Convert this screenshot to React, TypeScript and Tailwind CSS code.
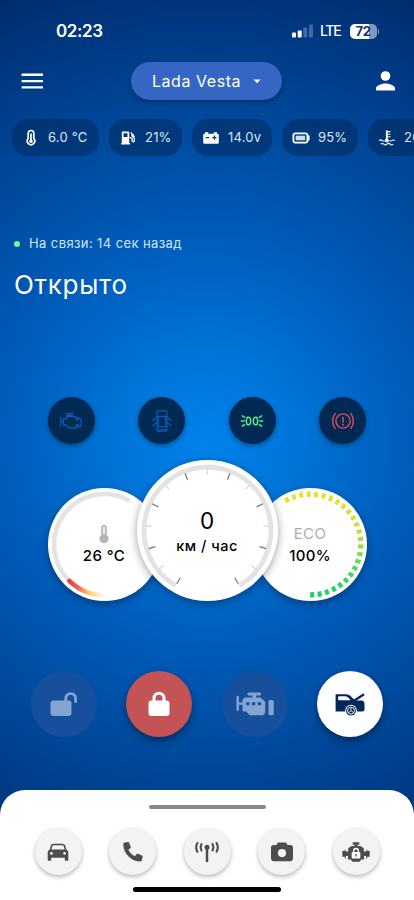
import type { ReactNode } from 'react';

/* ---------- Icons ---------- */

const ThermometerIcon = () => (
  <svg width="18" height="18" viewBox="0 0 18 18" fill="none" stroke="white">
    <path d="M6.2 4.300a2.800 2.800 0 0 1 5.600 0v5.200a3.700 3.700 0 1 1-5.600 0z" strokeWidth="1.700" />
    <path d="M9 5v7" strokeWidth="1.700" strokeLinecap="round" />
    <circle cx="9" cy="12.200" r="1.700" fill="white" stroke="none" />
  </svg>
);

const FuelIcon = () => (
  <svg width="18" height="18" viewBox="0 0 18 18" fill="none">
    <path
      fill="white"
      fillRule="evenodd"
      d="M4 2.600h5a1.200 1.200 0 0 1 1.200 1.200V14h.7v1.400H2.200V14h.6V3.800A1.200 1.200 0 0 1 4 2.600zm.5 1.700v3.600h4V4.300z"
    />
    <path d="M11.700 3.400l2.600 2.700c.8 1 1 2.400 1 4v1.700a1.100 1.100 0 0 1-2.200 0V10c0-.9-.6-1.400-2.600-1.400M13 5v1.700c0 1 .7 1.300 2 1.300" stroke="white" strokeWidth="1.300" />
  </svg>
);

const CarBatteryIcon = () => (
  <svg width="18" height="18" viewBox="0 0 18 18">
    <path
      fill="white"
      fillRule="evenodd"
      d="M3 3.200h3.200v1.600h5.600V3.200H15v1.600h.6a1.200 1.200 0 0 1 1.200 1.200v7.600a1.200 1.200 0 0 1-1.200 1.200H2.400a1.200 1.200 0 0 1-1.200-1.200V6a1.200 1.200 0 0 1 1.200-1.200H3zM3.600 8v1.300h3.600V8zm8.200-1.400V8h-1.400v1.300h1.400v1.400h1.300V9.300h1.400V8h-1.400V6.600z"
    />
  </svg>
);

const BatteryIcon = () => (
  <svg width="18" height="18" viewBox="0 0 18 18">
    <rect x="1.400" y="4.400" width="14" height="9.200" rx="1.800" fill="none" stroke="white" strokeWidth="1.800" />
    <rect x="3.700" y="6.700" width="9.400" height="4.600" fill="#cfdcee" />
    <path d="M16 6.600h1.600v4.800H16z" fill="white" />
  </svg>
);

const CoolantIcon = () => (
  <svg width="18" height="18" viewBox="0 0 18 18" fill="none" stroke="white">
    <path d="M8.800 1.400v10" strokeWidth="1.800" />
    <path d="M9 2.600h3.400M9 5.200h3.400M9 7.800h3.400" strokeWidth="1.100" />
    <circle cx="8.800" cy="11.600" r="2" fill="white" stroke="none" />
    <path d="M1 11.600c1.200-1 2.200-1 3.200 0 .8.600 1.400.6 2.200.2M11.400 11.800c.8.400 1.400.4 2.200-.2 1-.9 2-.9 3.200 0M2.600 15.200c1.200-1 2.200-1 3.200 0s2.100 1 3.200 0 2.200-1 3.200 0 2 .9 3 0" strokeWidth="1.100" />
  </svg>
);

const CheckEngineIcon = () => (
  <svg width="24" height="20" viewBox="0 0 24 20" fill="none" stroke="#0f58b4" strokeWidth="1.300">
    <path d="M6.200 2.700h8.600M10.500 3v2.400M7.200 4.500h6.600" />
    <path d="M1.700 5.800v10M1.700 10.700h2.600M4.300 7.600v6.400h2.900l3.500 3h6.500v-3h2v2h1.600c1.100-1 1.500-2.600 1.500-4.600s-.4-3.600-1.500-4.500h-1.600v2h-2V5.700H7.700v1.900z" />
  </svg>
);

const DoorsIcon = () => (
  <svg width="24" height="24" viewBox="0 0 24 24" fill="none" stroke="#0f58b4" strokeWidth="1.300">
    <path d="M8.300 1.900h7.400c.7 0 1.200.5 1.200 1.200v17.800c0 .8-.5 1.300-1.200 1.300H8.300c-.7 0-1.200-.5-1.200-1.300V3.100c0-.7.5-1.200 1.200-1.200z" />
    <path d="M7.200 7.500h9.600M7.200 17.600h9.600M8 20.800h8M7 7.800l-4.400 4.100M7 13.200l-4.400 4.100M17 7.800l4.400 4.100M17 13.200l4.400 4.100" />
    <path d="M8.400 8v9.400M15.600 8v9.400" strokeWidth="1" />
  </svg>
);

const ParkingLightsIcon = () => (
  <svg width="24" height="18" viewBox="0 0 24 18" fill="none" stroke="#62e88c" strokeWidth="1.500" strokeLinecap="round">
    <path d="M8.200 5.200h-.8C6.700 6.200 6.300 7.500 6.300 9s.4 2.800 1.100 3.800h.8c1.500 0 2.500-1.700 2.500-3.800S9.700 5.200 8.200 5.200zM15.800 5.200h.8c.7 1 1.100 2.300 1.100 3.800s-.4 2.800-1.100 3.800h-.8c-1.500 0-2.500-1.700-2.500-3.800s1-3.800 2.500-3.800z" />
    <path d="M4.600 5.300L2.400 3.900M4.200 9H1.400M4.600 12.700l-2.200 1.400M19.400 5.300l2.200-1.400M19.800 9h2.800M19.400 12.700l2.200 1.400" />
  </svg>
);

const BrakeIcon = () => (
  <svg width="24" height="20" viewBox="0 0 24 20" fill="none" stroke="#df4a59" strokeWidth="1.400" strokeLinecap="round">
    <circle cx="12" cy="10" r="7.100" />
    <path d="M4.100 2.600c-3.300 4.400-3.300 10.400 0 14.800M19.900 2.600c3.300 4.400 3.300 10.400 0 14.800M12 6.200v5" />
    <circle cx="12" cy="13.800" r=".4" />
  </svg>
);

const UnlockedIcon = () => (
  <svg width="30" height="28" viewBox="0 0 30 28" fill="#84a5d2">
    <rect x="1.500" y="10.500" width="21" height="15.500" rx="3" />
    <path d="M16.800 11V8.500a4.900 4.900 0 0 1 9.800 0v3" fill="none" stroke="#84a5d2" strokeWidth="2.900" strokeLinecap="round" />
  </svg>
);

const LockedIcon = () => (
  <svg width="24" height="28" viewBox="0 0 24 28" fill="white">
    <rect x="1.500" y="10.500" width="21" height="15.500" rx="3" />
    <path d="M7 11.500V8.200a5 5 0 0 1 10 0v3.300" fill="none" stroke="white" strokeWidth="3" />
  </svg>
);

const EngineIcon = () => (
  <svg width="40" height="26" viewBox="0 0 40 26" fill="#84a5d2">
    <rect x="12.500" y="1.500" width="13.500" height="3" rx="1.300" />
    <path d="M17.500 4h3.500v3h-3.500z" />
    <path d="M2.700 6v12.800M3 12.600h5" fill="none" stroke="#84a5d2" strokeWidth="2.400" strokeLinecap="round" />
    <path d="M10.800 6.500h14.700l4.700 4.200v10c0 2-1.200 3.500-3.200 3.500H14.800l-3.500-3.600H9.200c-1 0-1.700-.7-1.700-1.700V9.800c0-2 1.300-3.300 3.300-3.300z" />
    <rect x="33.500" y="9" width="5.200" height="15.200" rx="1.500" />
    <g fill="#164f9b">
      <circle cx="12.800" cy="12.800" r="1.800" />
      <circle cx="18.600" cy="12.800" r="1.800" />
      <circle cx="24.400" cy="12.800" r="1.800" />
    </g>
  </svg>
);

const TrunkIcon = () => (
  <svg width="32" height="26" viewBox="0 0 32 26" fill="#03265a">
    <path
      fillRule="evenodd"
      d="M1.600 3.200h10.900c3 0 4.800 2.300 6.800 4.600l1.400 1.700h6.800c2 0 3 1.500 3 3.500v5.500c0 1.300-.8 2-2 2H1.600zM5.500 5.300c-.9 0-1.400.5-1.400 1.300v1.300c0 .8.500 1.300 1.400 1.300h11c-1.700-2.200-3.100-3.900-5.400-3.900z"
    />
    <path d="M20 9.800l9.300-6" stroke="#03265a" strokeWidth="2.300" strokeLinecap="round" />
    <circle cx="17" cy="19.700" r="5.900" fill="white" />
    <circle cx="17" cy="19.700" r="4.900" />
    <circle cx="17" cy="19.700" r="3.500" fill="none" stroke="white" strokeWidth=".9" />
    <path d="M17 16.400v3.300l2.600 2M17 19.700l-2.600 2" stroke="white" strokeWidth=".8" fill="none" />
  </svg>
);

const CarIcon = () => (
  <svg width="24" height="20" viewBox="0 0 24 20" fill="#4d4d4d">
    <path
      fillRule="evenodd"
      d="M7.500 1.700h9c1.300 0 2.300.7 2.700 1.900l1.200 4.100c1.100.4 1.900 1.400 1.900 2.700v7.300c0 .6-.4 1-1 1h-1.500c-.6 0-1-.4-1-1v-2H5.200v2c0 .6-.4 1-1 1H2.700c-.6 0-1-.4-1-1v-7.300c0-1.300.8-2.300 1.900-2.700l1.200-4.100c.4-1.200 1.400-1.900 2.700-1.900zm.2 1.600c-.8 0-1.200.3-1.400 1l-1 3.200h13.400l-1-3.200c-.2-.7-.6-1-1.400-1zM5.400 10a1.400 1.400 0 1 0 0 2.800 1.400 1.400 0 0 0 0-2.800zm13.200 0a1.400 1.400 0 1 0 0 2.800 1.400 1.400 0 0 0 0-2.800z"
    />
  </svg>
);

const PhoneIcon = () => (
  <svg width="22" height="22" viewBox="0 0 22 22" fill="#4d4d4d">
    <path d="M2.100 1.800L5.800 1c.6-.1 1.100.2 1.300.7l1.700 4c.2.500.1 1-.3 1.300L6.400 8.800c1.300 2.800 3.600 5.100 6.500 6.500l1.800-2.200c.3-.4.9-.5 1.300-.3l4 1.700c.5.2.8.8.7 1.300l-.9 3.800c-.1.500-.6.9-1.100.9C9.300 20.500 1.200 12.400 1.200 2.900c0-.5.4-1 .9-1.100z" />
  </svg>
);

const AntennaIcon = () => (
  <svg width="26" height="22" viewBox="0 0 26 22" fill="none" stroke="#4d4d4d" strokeWidth="2.100" strokeLinecap="round">
    <path d="M13 7v13" strokeWidth="2.500" />
    <circle cx="13" cy="6.300" r="2.500" fill="#4d4d4d" stroke="none" />
    <path d="M7.500 3.200c-1 1.900-1 4.300 0 6.200M3.400 2c-1.500 2.700-1.500 6 0 8.700M18.500 3.200c1 1.900 1 4.300 0 6.200M22.600 2c1.500 2.700 1.500 6 0 8.700" />
  </svg>
);

const CameraIcon = () => (
  <svg width="24" height="22" viewBox="0 0 24 22" fill="#4d4d4d">
    <path
      fillRule="evenodd"
      d="M8.700 1.500h6.600c.7 0 1.200.4 1.500 1l.6 1.500h3c1.500 0 2.600 1.100 2.600 2.600v11c0 1.500-1.100 2.600-2.600 2.600H3.600C2.100 20.200 1 19.100 1 17.600v-11C1 5.100 2.100 4 3.600 4h3l.6-1.500c.3-.6.8-1 1.500-1zM12 8a4.100 4.100 0 1 0 0 8.200A4.100 4.100 0 0 0 12 8z"
    />
  </svg>
);

const EngineLockIcon = () => (
  <svg width="30" height="22" viewBox="0 0 30 22" fill="#4d4d4d">
    <path d="M11.700 1.200h6.600v2.600h-1.800V5h3l3.300 2.200v3.200h2.400V8.700h1V9.900h2.500v5.900h-2.500v1.600h-1v-2.300h-2.200v3.300h-2.700l-1.600 2.300h-7.400l-1.600-2.300H7v-3.300H4.800v2.300h-1v-1.600H1.300V9.900h2.500V8.700h1v1.700h2.400V7.200L10.500 5h3V3.800h-1.800z" />
    <rect x="10.700" y="11" width="8.600" height="6.600" rx=".8" fill="white" />
    <path d="M12.700 11.200V9.800a2.300 2.300 0 0 1 4.600 0v1.400" fill="none" stroke="white" strokeWidth="1.400" />
    <path d="M15 12.900v2.600" stroke="#4d4d4d" strokeWidth="1.300" />
  </svg>
);

/* ---------- Data ---------- */

const chips: { icon: ReactNode; value: string; width: string }[] = [
  { icon: <ThermometerIcon />, value: '6.0 °C', width: 'w-[87px]' },
  { icon: <FuelIcon />, value: '21%', width: 'w-[73px]' },
  { icon: <CarBatteryIcon />, value: '14.0v', width: 'w-[80px]' },
  { icon: <BatteryIcon />, value: '95%', width: 'w-[76px]' },
  { icon: <CoolantIcon />, value: '26 °C', width: 'w-[87px]' },
];

const indicators = [<CheckEngineIcon />, <DoorsIcon />, <ParkingLightsIcon />, <BrakeIcon />];

const actions = [
  { icon: <UnlockedIcon />, style: 'bg-[#164f9b]' },
  { icon: <LockedIcon />, style: 'bg-[#c45355] shadow-[0_4px_9px_rgba(0,0,0,0.4)]' },
  { icon: <EngineIcon />, style: 'bg-[#164f9b]' },
  { icon: <TrunkIcon />, style: 'bg-white shadow-[0_4px_9px_rgba(0,0,0,0.4)]' },
];

const tabs = [<CarIcon />, <PhoneIcon />, <AntennaIcon />, <CameraIcon />, <EngineLockIcon />];

const ecoColors = [
  '#ece02f', '#ece02f', '#ecdf2f', '#ecdf2f', '#ebde30', '#ebde30', '#eade31', '#e8de33', '#e4de36',
  '#dfde39', '#d6de3d', '#cbde41', '#bcde46', '#a9dd4b', '#93dc50', '#7cdb55', '#66da5a', '#52d85f',
  '#42d663', '#36d566', '#2dd368', '#27d26a', '#22d16b', '#1fd06c', '#1dcf6c',
];

/* ---------- Gauges ---------- */

// angle is measured clockwise from the top
const polar = (c: number, r: number, angle: number) => {
  const rad = (angle * Math.PI) / 180;
  return [c + r * Math.sin(rad), c - r * Math.cos(rad)];
};

const arc = (c: number, r: number, from: number, to: number) => {
  const [x1, y1] = polar(c, r, from);
  const [x2, y2] = polar(c, r, to);
  return `M${x1} ${y1}A${r} ${r} 0 ${to - from > 180 ? 1 : 0} 1 ${x2} ${y2}`;
};

function TemperatureGauge() {
  return (
    <div className="relative w-[113px] h-[113px] rounded-full bg-white shadow-[0_3px_8px_rgba(0,0,0,0.35)]">
      <svg className="absolute inset-0" width="113" height="113" viewBox="0 0 113 113" fill="none">
        <defs>
          <linearGradient id="heat" gradientUnits="userSpaceOnUse" x1="21" y1="0" x2="57" y2="0">
            <stop offset="0" stopColor="#f0393f" />
            <stop offset="0.25" stopColor="#f4605a" />
            <stop offset="0.55" stopColor="#fbcb74" />
            <stop offset="1" stopColor="#ffffff" />
          </linearGradient>
        </defs>
        <path d={arc(56.5, 50.5, 224, 388)} stroke="#e3e3e3" strokeWidth="4.500" strokeLinecap="round" />
        <path d={arc(56.5, 50.5, 180, 224)} stroke="url(#heat)" strokeWidth="4.500" strokeLinecap="round" />
      </svg>
      <div className="relative flex flex-col items-center pt-[36px]">
        <svg width="12" height="20" viewBox="0 0 12 20">
          <path d="M3.200 3.800a2.800 2.800 0 0 1 5.600 0v7.300a4.600 4.600 0 1 1-5.600 0z" fill="#b5b5b5" />
          <path d="M6 3.500v6" stroke="white" strokeWidth="1.500" strokeLinecap="round" />
        </svg>
        <span className="mt-[2px] text-[15px] leading-5 font-medium tracking-[0.4px] text-black">26 °C</span>
      </div>
    </div>
  );
}

function SpeedGauge() {
  const ticks = Array.from({ length: 15 }, (_, i) => ({ angle: -150 + (i * 150) / 7, major: i % 2 === 0 }));

  return (
    <div className="relative z-10 -mx-6 w-[141px] h-[141px] rounded-full bg-white shadow-[0_2px_9px_rgba(0,0,0,0.38)]">
      <svg className="absolute inset-0" width="141" height="141" viewBox="0 0 141 141" fill="none">
        <path d={arc(70.5, 63.5, -150, 150)} stroke="#e3e3e3" strokeWidth="4.800" />
        {ticks.map(({ angle, major }) => {
          const [x1, y1] = polar(70.5, major ? 54.5 : 56, angle);
          const [x2, y2] = polar(70.5, 61.5, angle);
          return (
            <line key={angle} x1={x1} y1={y1} x2={x2} y2={y2} stroke={major ? '#757575' : '#d6d6d6'} strokeWidth="1.200" />
          );
        })}
      </svg>
      <div className="relative flex flex-col items-center pt-[47px] text-black">
        <span className="text-[22.5px] leading-7">0</span>
        <span className="mt-px text-[14.500px] leading-5 font-medium tracking-[0.5px]">км / час</span>
      </div>
    </div>
  );
}

function EcoGauge() {
  return (
    <div className="relative w-[113px] h-[113px] rounded-full bg-white shadow-[0_3px_8px_rgba(0,0,0,0.35)]">
      <svg className="absolute inset-0" width="113" height="113" viewBox="0 0 113 113" fill="none">
        {ecoColors.map((color, i) => {
          const angle = -27.8 + i * 8.58;
          return <path key={i} d={arc(56.5, 50.3, angle - 2.3, angle + 2.3)} stroke={color} strokeWidth="5.300" />;
        })}
      </svg>
      <div className="relative flex flex-col items-center pt-[36px] text-[15px] leading-5">
        <span className="tracking-[0.4px] text-[#adadad]">ECO</span>
        <span className="mt-[2px] font-medium tracking-[0.3px] text-black">100%</span>
      </div>
    </div>
  );
}

/* ---------- Page ---------- */

export default function App() {
  return (
    <div className="flex h-[900px] w-[414px] flex-col overflow-hidden bg-[radial-gradient(circle_at_50%_440px,#0082ec_0px,#0074d8_90px,#005bb8_210px,#00479a_330px,#002a69_500px)] font-['Inter',sans-serif] text-white">
      {/* Status bar */}
      <div className="flex h-[62px] shrink-0 items-center justify-between pl-[56px] pr-[35px]">
        <span className="text-[17px] leading-5 font-semibold tracking-[-0.4px]">02:23</span>
        <div className="flex items-center">
          <svg width="21" height="14" viewBox="0 0 21 14" fill="white">
            <rect x="0" y="8.500" width="4" height="5" rx="1" />
            <rect x="5.700" y="6.500" width="4" height="7" rx="1" />
            <rect x="11.300" y="3.500" width="4" height="10" rx="1" opacity="0.25" />
            <rect x="17" y=".5" width="4" height="13" rx="1" opacity="0.25" />
          </svg>
          <span className="ml-[7px] text-[14px] leading-4 font-medium tracking-[-1.2px]">LTE</span>
          <div className="ml-[9px] flex h-[15px] w-[27px] items-center justify-center rounded-[5px] bg-[linear-gradient(90deg,#fff_72%,#8398be_72%)] text-[13px] leading-none font-bold tracking-[-0.3px] text-[#0b3471]">
            72
          </div>
          <div className="ml-px h-[5px] w-[1.5px] rounded-r-full bg-[#8398be]" />
        </div>
      </div>

      {/* Header */}
      <div className="flex h-[38px] shrink-0 items-center justify-between pl-[21px] pr-[19px]">
        <button>
          <svg width="22" height="16" viewBox="0 0 22 16" fill="white">
            <path d="M.6.6h21.400v2.300H.6zM.6 6.900h21.400v2.300H.6zM.6 13.200h21.400v2.300H.6z" />
          </svg>
        </button>
        <button className="-ml-[6px] flex h-[38px] w-[151px] items-center justify-center rounded-full bg-[#3566c3] shadow-[0_2px_4px_rgba(0,0,0,0.35)]">
          <span className="text-[16px] tracking-[0.55px]">Lada Vesta</span>
          <svg className="ml-[12px]" width="8" height="5" viewBox="0 0 8 5" fill="white">
            <path d="M.5.500h7L4 4.200z" />
          </svg>
        </button>
        <button>
          <svg width="19" height="20" viewBox="0 0 19 20" fill="white">
            <circle cx="9.500" cy="5" r="4.800" />
            <path d="M0 19.500v-2.300c0-3.200 6.300-4.800 9.500-4.800s9.500 1.600 9.500 4.800v2.300z" />
          </svg>
        </button>
      </div>

      {/* Sensors */}
      <div className="mt-[19px] flex h-[37px] shrink-0 gap-[10px] pl-3">
        {chips.map((chip, i) => (
          <div key={i} className={`flex shrink-0 items-center rounded-2xl bg-[#002a5c]/55 pl-[10px] ${chip.width}`}>
            {chip.icon}
            <span className="ml-2 text-[13px] tracking-[0.2px] whitespace-nowrap text-[#dce6f3]">{chip.value}</span>
          </div>
        ))}
      </div>

      {/* Connection and lock state */}
      <div className="mt-[78px] flex h-5 shrink-0 items-center pl-[14px]">
        <span className="h-[6px] w-[6px] rounded-full bg-[#7af58f]" />
        <span className="ml-[9px] text-[13px] tracking-[0.4px] text-[#d4e4f6]">На связи: 14 сек назад</span>
      </div>
      <h1 className="mt-[13px] h-9 shrink-0 pl-[14px] text-[26px] leading-9 tracking-[0.7px]">Открыто</h1>

      {/* Indicators */}
      <div className="mt-[94px] flex shrink-0 justify-between px-[47.5px]">
        {indicators.map((icon, i) => (
          <div key={i} className="flex h-[47px] w-[47px] items-center justify-center rounded-full bg-[#002a54] shadow-[0_2px_5px_rgba(0,0,0,0.35)]">
            {icon}
          </div>
        ))}
      </div>

      {/* Gauges */}
      <div className="mt-4 flex shrink-0 items-end justify-center">
        <TemperatureGauge />
        <SpeedGauge />
        <EcoGauge />
      </div>

      {/* Actions */}
      <div className="mt-[70px] flex shrink-0 justify-between px-[30.5px]">
        {actions.map((action, i) => (
          <button key={i} className={`flex h-[66px] w-[66px] items-center justify-center rounded-full ${action.style}`}>
            {action.icon}
          </button>
        ))}
      </div>

      {/* Bottom sheet */}
      <div className="mt-[53px] flex grow flex-col items-center rounded-t-[25px] bg-white">
        <div className="mt-[15px] h-1 w-[117px] rounded-full bg-[#888]" />
        <div className="mt-[19px] flex w-full justify-between px-[34.5px]">
          {tabs.map((icon, i) => (
            <button key={i} className="flex h-[47px] w-[47px] items-center justify-center rounded-full bg-[#f3f3f3] shadow-[0_2px_4px_rgba(0,0,0,0.28)]">
              {icon}
            </button>
          ))}
        </div>
        <div className="mt-3 h-[5px] w-[148px] rounded-full bg-black" />
      </div>
    </div>
  );
}
